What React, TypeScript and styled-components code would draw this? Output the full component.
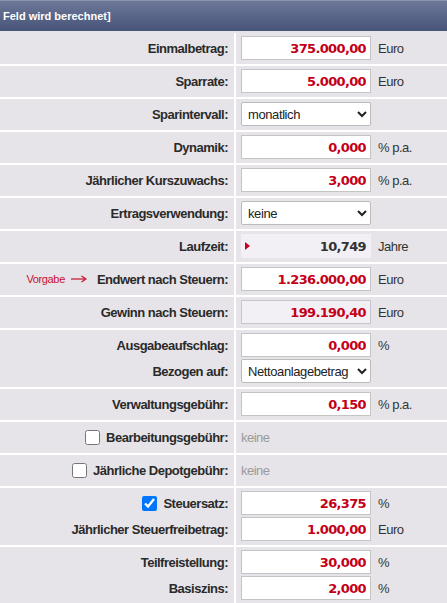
import styled, { createGlobalStyle } from "styled-components";

const GlobalStyle = createGlobalStyle`
  html, body {
    margin: 0;
    padding: 0;
    overflow: hidden;
    background: #ffffff;
  }
  body {
    font-family: "Liberation Sans", Arial, sans-serif;
  }
`;

type Line =
  | { kind: "input"; label: string; value: string; unit: string; pre?: "vorgabe" | "check" | "checked" }
  | { kind: "select"; label: string; value: string }
  | { kind: "output"; label: string; value: string; unit: string; marker?: boolean; red?: boolean }
  | { kind: "text"; label: string; value: string; pre?: "check" };

const rows: Line[][] = [
  [{ kind: "input", label: "Einmalbetrag:", value: "375.000,00", unit: "Euro" }],
  [{ kind: "input", label: "Sparrate:", value: "5.000,00", unit: "Euro" }],
  [{ kind: "select", label: "Sparintervall:", value: "monatlich" }],
  [{ kind: "input", label: "Dynamik:", value: "0,000", unit: "% p.a." }],
  [{ kind: "input", label: "Jährlicher Kurszuwachs:", value: "3,000", unit: "% p.a." }],
  [{ kind: "select", label: "Ertragsverwendung:", value: "keine" }],
  [{ kind: "output", label: "Laufzeit:", value: "10,749", unit: "Jahre", marker: true }],
  [{ kind: "input", label: "Endwert nach Steuern:", value: "1.236.000,00", unit: "Euro", pre: "vorgabe" }],
  [{ kind: "output", label: "Gewinn nach Steuern:", value: "199.190,40", unit: "Euro", red: true }],
  [
    { kind: "input", label: "Ausgabeaufschlag:", value: "0,000", unit: "%" },
    { kind: "select", label: "Bezogen auf:", value: "Nettoanlagebetrag" },
  ],
  [{ kind: "input", label: "Verwaltungsgebühr:", value: "0,150", unit: "% p.a." }],
  [{ kind: "text", label: "Bearbeitungsgebühr:", value: "keine", pre: "check" }],
  [{ kind: "text", label: "Jährliche Depotgebühr:", value: "keine", pre: "check" }],
  [
    { kind: "input", label: "Steuersatz:", value: "26,375", unit: "%", pre: "checked" },
    { kind: "input", label: "Jährlicher Steuerfreibetrag:", value: "1.000,00", unit: "Euro" },
  ],
  [
    { kind: "input", label: "Teilfreistellung:", value: "30,000", unit: "%" },
    { kind: "input", label: "Basiszins:", value: "2,000", unit: "%" },
  ],
];

const ArrowIcon = () => (
  <svg width="16" height="8" viewBox="0 0 16 8">
    <path d="M0 4 H14" stroke="#c8102e" strokeWidth="1.2" />
    <path d="M10.5 1 L15 4 L10.5 7" stroke="#c8102e" strokeWidth="1.2" fill="none" />
  </svg>
);

const renderLabel = (line: Line) => {
  const pre = "pre" in line ? line.pre : undefined;
  return (
    <LabelLine key={line.label}>
      {pre === "vorgabe" && (
        <>
          <Vorgabe>Vorgabe</Vorgabe>
          <ArrowWrap>
            <ArrowIcon />
          </ArrowWrap>
        </>
      )}
      {(pre === "check" || pre === "checked") && (
        <CheckBox type="checkbox" defaultChecked={pre === "checked"} />
      )}
      <LabelText>{line.label}</LabelText>
    </LabelLine>
  );
};

const renderValue = (line: Line) => {
  if (line.kind === "select") {
    return (
      <ValueLine key={line.label}>
        <Select defaultValue={line.value}>
          <option value={line.value}>{line.value}</option>
        </Select>
      </ValueLine>
    );
  }
  if (line.kind === "output") {
    return (
      <ValueLine key={line.label}>
        <OutputBox bordered={!!line.red}>
          {line.marker && <Marker />}
          <OutputValue red={!!line.red}>{line.value}</OutputValue>
        </OutputBox>
        <Unit>{line.unit}</Unit>
      </ValueLine>
    );
  }
  if (line.kind === "text") {
    return (
      <ValueLine key={line.label}>
        <Muted>{line.value}</Muted>
      </ValueLine>
    );
  }
  return (
    <ValueLine key={line.label}>
      <NumInput type="text" defaultValue={line.value} />
      <Unit>{line.unit}</Unit>
    </ValueLine>
  );
};

const App = () => {
  return (
    <>
      <GlobalStyle />
      <Form>
        <Header>Feld wird berechnet]</Header>
        {rows.map((row, i) => (
          <Row key={i}>
            <LabelCell>{row.map(renderLabel)}</LabelCell>
            <ValueCell>{row.map(renderValue)}</ValueCell>
          </Row>
        ))}
      </Form>
    </>
  );
};

export default App;

const Form = styled.div`
  width: 447px;
  display: flex;
  flex-direction: column;
  gap: 2px;
  background: #ffffff;
`;

const Header = styled.div`
  height: 30px;
  display: flex;
  align-items: center;
  padding-left: 3px;
  border-top: 1px solid #8c95ad;
  border-bottom: 2px solid #e6e4e8;
  margin-bottom: -2px;
  background: linear-gradient(to bottom, #6d7898 0%, #5a6688 50%, #47557a 100%);
  color: #ffffff;
  font-family: "Liberation Sans", Arial, sans-serif;
  font-weight: bold;
  font-size: 11px;
`;

const Row = styled.div`
  display: grid;
  grid-template-columns: 234px 1fr;
  column-gap: 2px;
`;

const LabelCell = styled.div`
  background: #e6e4e8;
  display: flex;
  flex-direction: column;
  gap: 2px;
  padding: 3px 6px 4px 0;
`;

const ValueCell = styled.div`
  background: #e6e4e8;
  display: flex;
  flex-direction: column;
  gap: 2px;
  padding: 3px 0 4px 5px;
`;

const LabelLine = styled.div`
  height: 24px;
  display: flex;
  align-items: center;
  justify-content: flex-end;
`;

const LabelText = styled.span`
  font-family: "Liberation Sans", Arial, sans-serif;
  font-weight: bold;
  font-size: 13px;
  letter-spacing: -0.5px;
  color: #2a2a2a;
  white-space: nowrap;
`;

const Vorgabe = styled.span`
  font-family: "Liberation Sans", Arial, sans-serif;
  font-size: 11px;
  letter-spacing: -0.35px;
  color: #c8102e;
  margin-right: 6px;
`;

const ArrowWrap = styled.span`
  display: flex;
  align-items: center;
  margin-right: 10px;
`;

const CheckBox = styled.input`
  width: 15px;
  height: 15px;
  margin: 0 6px 0 0;
`;

const ValueLine = styled.div`
  height: 24px;
  display: flex;
  align-items: center;
  gap: 7px;
`;

const NumInput = styled.input`
  box-sizing: border-box;
  width: 130px;
  height: 24px;
  margin: 0;
  border: 1px solid #c4c4c4;
  background: #ffffff;
  padding: 0 4px 0 2px;
  text-align: right;
  font-family: "DejaVu Sans", Verdana, sans-serif;
  font-weight: bold;
  font-size: 13px;
  letter-spacing: -0.65px;
  color: #c40018;
  outline: none;
`;

const Select = styled.select`
  box-sizing: border-box;
  width: 130px;
  height: 24px;
  margin: 0;
  border: 1px solid #bcbcbc;
  border-radius: 2px;
  background-color: #ffffff;
  font-family: "Liberation Sans", Arial, sans-serif;
  font-size: 13px;
  letter-spacing: -0.4px;
  color: #222222;
  padding-left: 2px;
`;

const OutputBox = styled.div<{ bordered: boolean }>`
  box-sizing: border-box;
  width: 130px;
  height: 24px;
  display: flex;
  align-items: center;
  padding: 0 4px 0 3px;
  background: #f2f0f4;
  border: ${(p) => (p.bordered ? "1px solid #c8c6ca" : "1px solid transparent")};
`;

const Marker = styled.span`
  width: 0;
  height: 0;
  border-top: 4px solid transparent;
  border-bottom: 4px solid transparent;
  border-left: 5px solid #c8001e;
`;

const OutputValue = styled.span<{ red: boolean }>`
  margin-left: auto;
  font-family: "DejaVu Sans", Verdana, sans-serif;
  font-weight: bold;
  font-size: 13px;
  letter-spacing: -0.65px;
  color: ${(p) => (p.red ? "#c40018" : "#333333")};
`;

const Unit = styled.span`
  font-family: "Liberation Sans", Arial, sans-serif;
  font-size: 13px;
  letter-spacing: -0.5px;
  color: #333333;
  white-space: nowrap;
`;

const Muted = styled.span`
  font-family: "Liberation Sans", Arial, sans-serif;
  font-size: 13px;
  letter-spacing: -0.5px;
  color: #9a9a9a;
`;
